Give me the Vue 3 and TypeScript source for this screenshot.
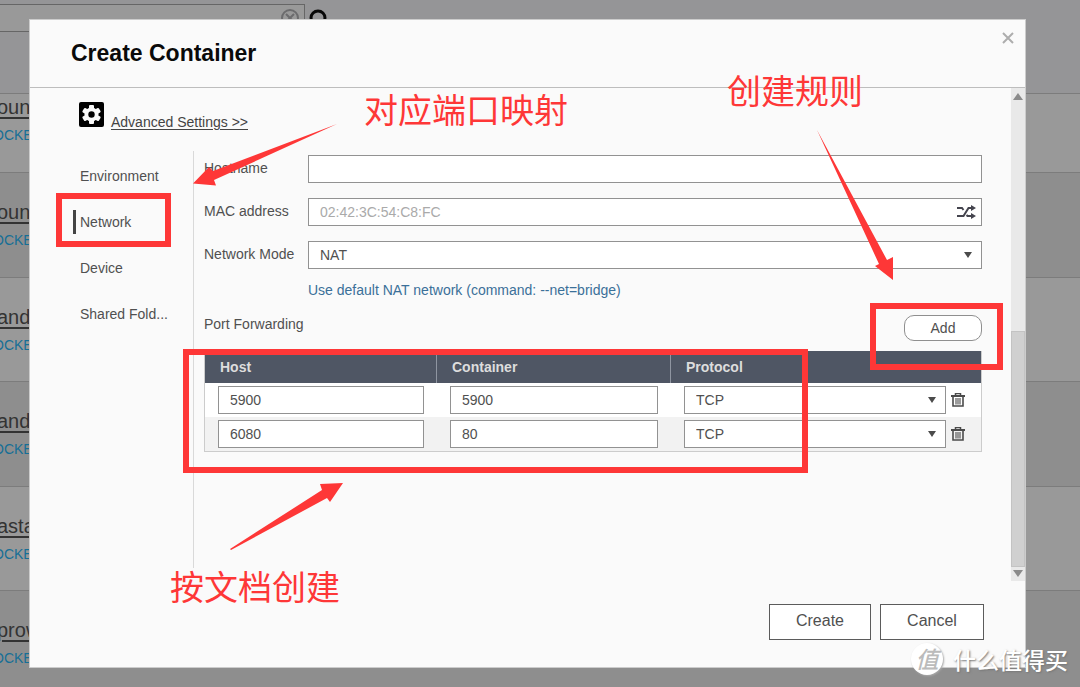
<script setup lang="ts">
import { ref } from 'vue'

interface Rule {
  host: string
  container: string
  protocol: string
}

const backgroundRows = [
  { name: 'oun', tag: 'OCKE' },
  { name: 'oun', tag: 'OCKE' },
  { name: 'and', tag: 'OCKE' },
  { name: 'and', tag: 'OCKE' },
  { name: 'asta', tag: 'OCKE' },
  { name: 'prow', tag: 'OCKE' },
]

const tabs = ['Environment', 'Network', 'Device', 'Shared Fold...']
const activeTab = ref('Network')
const hostname = ref('')
const mac = ref('')
const mode = ref('NAT')
const rules = ref<Rule[]>([
  { host: '5900', container: '5900', protocol: 'TCP' },
  { host: '6080', container: '80', protocol: 'TCP' },
])

function addRule() {
  rules.value.push({ host: '', container: '', protocol: 'TCP' })
}
function removeRule(index: number) {
  rules.value.splice(index, 1)
}
</script>

<template>
  <div class="page">
    <div class="backdrop" aria-hidden="true">
      <div class="toolbar">
        <div class="search">
          <svg width="20" height="20" viewBox="0 0 20 20" fill="none" stroke="#6b6b6d" stroke-width="2">
            <circle cx="10" cy="10" r="8" />
            <path d="M6 6l8 8M14 6l-8 8" />
          </svg>
        </div>
        <svg class="lens" width="26" height="26" viewBox="0 0 26 26" fill="none" stroke="#080808" stroke-width="3">
          <circle cx="10" cy="10" r="7" />
          <path d="M15 15l8 8" />
        </svg>
      </div>
      <div v-for="(row, i) in backgroundRows" :key="i" class="bg-row">
        <span class="bg-name">{{ row.name }}</span>
        <span class="bg-tag">{{ row.tag }}</span>
      </div>
    </div>

    <div class="overlay">
      <section class="dialog" role="dialog" aria-labelledby="dialog-title">
        <header class="head">
          <h1 id="dialog-title">Create Container</h1>
          <button class="close" type="button" aria-label="Close">
            <svg width="12" height="12" viewBox="0 0 12 12" stroke="#adadad" stroke-width="2">
              <path d="M1 1l10 10M11 1L1 11" />
            </svg>
          </button>
        </header>

        <div class="body">
          <div class="content">
            <div class="advanced">
              <svg width="25" height="25" viewBox="0 0 25 25">
                <rect width="25" height="25" rx="2" fill="#000" />
                <g fill="#fafafa">
                  <circle cx="12.5" cy="12.5" r="7" />
                  <rect x="10" y="3" width="5" height="19" rx="1" />
                  <rect x="10" y="3" width="5" height="19" rx="1" transform="rotate(60 12.5 12.5)" />
                  <rect x="10" y="3" width="5" height="19" rx="1" transform="rotate(120 12.5 12.5)" />
                </g>
                <circle cx="12.5" cy="12.5" r="3.2" fill="#000" />
              </svg>
              <a href="#">Advanced Settings &gt;&gt;</a>
            </div>

            <div class="columns">
              <nav class="tabs">
                <button
                  v-for="tab in tabs"
                  :key="tab"
                  type="button"
                  :class="{ active: tab === activeTab }"
                  @click="activeTab = tab"
                >{{ tab }}</button>
              </nav>

              <form class="settings" @submit.prevent>
                <div class="field">
                  <label for="hostname">Hostname</label>
                  <input id="hostname" v-model="hostname" type="text" />
                </div>
                <div class="field">
                  <label for="mac">MAC address</label>
                  <div class="control">
                    <input id="mac" v-model="mac" type="text" placeholder="02:42:3C:54:C8:FC" />
                    <button class="shuffle" type="button" aria-label="Generate address">
                      <svg width="19" height="14" viewBox="0 0 19 14">
                        <path d="M0 3h5l1.500 2M0 11h6.500L11.500 3H15M9.500 10l1 1H15" fill="none" stroke="#44444e" stroke-width="2" />
                        <path d="M14 0l5 3-5 3zM14 8l5 3-5 3z" fill="#44444e" />
                      </svg>
                    </button>
                  </div>
                </div>
                <div class="field">
                  <label for="mode">Network Mode</label>
                  <div class="control">
                    <select id="mode" v-model="mode"><option>NAT</option></select>
                    <svg class="caret" width="8" height="6" viewBox="0 0 8 6"><path d="M0 0h8L4 6z" fill="#4b4b4b" /></svg>
                  </div>
                </div>
                <p class="hint">Use default NAT network (command: --net=bridge)</p>

                <div class="ports-head">
                  <span>Port Forwarding</span>
                  <button type="button" @click="addRule">Add</button>
                </div>
                <table>
                  <colgroup><col class="c-host" /><col class="c-container" /><col /></colgroup>
                  <thead>
                    <tr><th>Host</th><th>Container</th><th>Protocol</th></tr>
                  </thead>
                  <tbody>
                    <tr v-for="(rule, i) in rules" :key="i">
                      <td><input v-model="rule.host" type="text" aria-label="Host port" /></td>
                      <td><input v-model="rule.container" type="text" aria-label="Container port" /></td>
                      <td>
                        <div class="protocol">
                          <div class="control">
                            <select v-model="rule.protocol" aria-label="Protocol">
                              <option>TCP</option>
                              <option>UDP</option>
                            </select>
                            <svg class="caret" width="8" height="6" viewBox="0 0 8 6"><path d="M0 0h8L4 6z" fill="#4b4b4b" /></svg>
                          </div>
                          <button class="trash" type="button" aria-label="Delete rule" @click="removeRule(i)">
                            <svg width="14" height="14" viewBox="0 0 14 14" fill="none" stroke="#4b4b4b">
                              <path d="M0 3h14" stroke-width="2" />
                              <path d="M4.500 2.500v-2h5v2" stroke-width="1.500" />
                              <path d="M2 4v9h10V4" stroke-width="1.600" />
                              <path d="M5 5v6.500M7 5v6.500M9 5v6.500" stroke-width="1.100" />
                            </svg>
                          </button>
                        </div>
                      </td>
                    </tr>
                  </tbody>
                </table>
              </form>
            </div>
          </div>

          <div class="scrollbar" aria-hidden="true">
            <svg width="10" height="7" viewBox="0 0 10 7"><path d="M0 7h10L5 0z" fill="#8b8b8b" /></svg>
            <div class="track"><div class="thumb"></div></div>
            <svg width="10" height="7" viewBox="0 0 10 7"><path d="M0 0h10L5 7z" fill="#8b8b8b" /></svg>
          </div>
        </div>

        <footer class="foot">
          <button class="create" type="button">Create</button>
          <button class="cancel" type="button">Cancel</button>
        </footer>
      </section>
    </div>

    <svg class="notes" width="1080" height="687" viewBox="0 0 1080 687">
      <g fill="none" stroke="#fe3737" stroke-width="6">
        <rect x="59" y="196" width="109" height="48" />
        <rect x="186" y="352" width="619" height="118" />
        <rect x="873" y="306" width="127" height="61" />
      </g>
      <g fill="#fe3737">
        <path d="M337 124L213 171L209 167L193 183.500L216 185.500L214 180Z" />
        <path d="M817 130L887 260L893 257L893 280L875 266L879 264Z" />
        <path d="M230 549L322 490L320 484L343 483L330 502L327 498L231 550Z" />
        <text x="364" y="123">对应端口映射</text>
        <text x="727" y="104">创建规则</text>
        <text x="170" y="600">按文档创建</text>
      </g>
    </svg>

    <div class="watermark">
      <span class="seal">值</span>
      <span>什么值得买</span>
    </div>
  </div>
</template>

<style>
body {
  margin: 0;
}
</style>

<style scoped>
.page {
  position: relative;
  min-height: 100vh;
  overflow: hidden;
  font-family: "Liberation Sans", "Noto Sans CJK SC", Arial, sans-serif;
  font-size: 14px;
  line-height: 18px;
  color: #505050;
  background: #8e8e8e;
}
.page * {
  box-sizing: border-box;
}
button,
input,
select {
  font: inherit;
  color: inherit;
  margin: 0;
}
button {
  padding: 0;
  border: 0;
  background: none;
  cursor: pointer;
}
svg {
  display: block;
}

.backdrop {
  position: absolute;
  inset: 0;
  overflow: hidden;
}
.toolbar {
  display: flex;
  height: 93px;
  padding-top: 4px;
  background: #959597;
}
.search {
  display: flex;
  justify-content: flex-end;
  width: 305px;
  height: 28px;
  padding: 3px 4px;
  border: 1px solid #666;
  border-left: 0;
  background: #999;
}
.lens {
  margin: 4px 0 0 3px;
}
.bg-row {
  display: flex;
  flex-direction: column;
  align-items: flex-start;
  height: 105px;
  padding-top: 26px;
  border-top: 1px solid #7c7c7c;
  background: #999;
}
.bg-row:nth-child(2) {
  height: 79px;
  padding-top: 0;
}
.bg-row:nth-child(odd) {
  background: #8e8e8e;
}
.bg-row:nth-child(even):not(:nth-child(2)) {
  height: 104px;
}
.bg-name {
  width: 100%;
  height: 32px;
  margin-left: -3px;
  font-size: 20px;
  line-height: 26px;
  color: #333;
  text-decoration: underline;
  text-underline-offset: 3px;
}
.bg-tag {
  margin-left: -7px;
  color: #166f96;
}

.overlay {
  position: relative;
  display: flex;
  min-height: 100vh;
  padding: 19px 54px 19px 29px;
}
.dialog {
  display: flex;
  flex: 1;
  flex-direction: column;
  min-width: 0;
  border: 1px solid #ccc;
  background: #fafafa;
}
.head {
  display: flex;
  justify-content: space-between;
  height: 68px;
  padding: 12px 11px 0 41px;
  border-bottom: 1px solid #bdbdbd;
}
h1 {
  margin: 0;
  padding-top: 7px;
  font-size: 23px;
  line-height: 28px;
  color: #0a0a0a;
}
.close {
  align-self: flex-start;
}
.body {
  display: flex;
}
.content {
  flex: 1;
  min-width: 0;
  padding: 14px 29px 13px 49px;
}
.advanced {
  display: flex;
  align-items: flex-start;
  gap: 7px;
  height: 49px;
}
.advanced a {
  margin-top: 11px;
  color: #444;
  text-underline-offset: 2px;
}
.columns {
  display: flex;
  min-height: 417px;
}
.tabs {
  display: flex;
  flex-direction: column;
  align-items: flex-start;
  gap: 22px;
  width: 114px;
  padding-top: 13px;
}
.tabs button {
  height: 24px;
  padding-left: 1px;
  white-space: nowrap;
}
.tabs .active {
  margin-left: -6px;
  padding-left: 4px;
  border-left: 3px solid #444;
}
.settings {
  flex: 1;
  min-width: 0;
  padding: 4px 0 0 10px;
  border-left: 1px solid #d9d9d9;
}
.field {
  display: grid;
  grid-template-columns: 104px 1fr;
  margin-bottom: 15px;
}
.field label {
  padding-top: 4px;
}
input,
select {
  display: block;
  width: 100%;
  height: 28px;
  padding: 0 11px;
  border: 1px solid #929292;
  border-radius: 0;
  outline: 0;
  background: #fff;
  appearance: none;
}
input::placeholder {
  color: #aaa;
  opacity: 1;
}
.control {
  position: relative;
  flex: 1;
  min-width: 0;
}
.shuffle {
  position: absolute;
  top: 7px;
  right: 6px;
}
.caret {
  position: absolute;
  top: 11px;
  right: 10px;
  pointer-events: none;
}
.hint {
  margin: -3px 0 0 104px;
  color: #3b7099;
}
.ports-head {
  display: flex;
  justify-content: space-between;
  height: 52px;
  padding-top: 16px;
}
.ports-head button {
  width: 78px;
  height: 26px;
  border: 1px solid #8f8f8f;
  border-radius: 10px;
  background: #fff;
}
table {
  width: 100%;
  table-layout: fixed;
  border: 1px solid #ccc;
  border-top: 0;
  border-spacing: 0;
  background: #fff;
}
.c-host {
  width: 231px;
}
.c-container {
  width: 234px;
}
th {
  height: 32px;
  padding: 0 15px;
  text-align: left;
  color: #ddd;
  background: #4f5664;
}
th + th {
  border-left: 1px solid #8f95a1;
}
td {
  height: 34px;
  padding: 3px 12px 3px 13px;
}
td + td {
  padding-left: 14px;
}
td:last-child {
  padding-right: 16px;
}
tbody tr:nth-child(even) {
  background: #f2f2f2;
}
.protocol {
  display: flex;
  align-items: center;
  gap: 5px;
}
.foot {
  display: flex;
  justify-content: flex-end;
  gap: 9px;
  padding: 23px 41px 27px;
}
.foot button {
  height: 36px;
  padding-bottom: 2px;
  border: 1px solid #5b5b5b;
  background: #fff;
  font-size: 16px;
}
.create {
  width: 102px;
}
.cancel {
  width: 104px;
}
.scrollbar {
  display: flex;
  flex-direction: column;
  align-items: center;
  width: 14px;
  padding: 5px 0 4px;
  background: #e9e9e9;
}
.track {
  display: flex;
  flex: 1;
  flex-direction: column;
  justify-content: flex-end;
  width: 100%;
  padding: 4px 0 3px;
}
.thumb {
  height: 51%;
  border: 1px solid #c3c3c3;
  background: #d0d0d0;
}

.notes {
  position: absolute;
  top: 0;
  left: 0;
  pointer-events: none;
  font-family: "Noto Sans CJK SC", sans-serif;
  font-size: 34px;
}
.watermark {
  position: absolute;
  right: 12px;
  bottom: 12px;
  display: flex;
  align-items: center;
  gap: 10px;
  font-family: "Noto Sans CJK SC", sans-serif;
  font-size: 23px;
  font-weight: 500;
  line-height: 30px;
  color: #fff;
  text-shadow: 1px 1px 2px #777;
  pointer-events: none;
}
.seal {
  width: 32px;
  height: 32px;
  border-radius: 50%;
  background: #fff;
  box-shadow: 1px 1px 2px #aaa;
  font-style: italic;
  text-align: center;
  color: #bbb;
  text-shadow: none;
}
</style>
